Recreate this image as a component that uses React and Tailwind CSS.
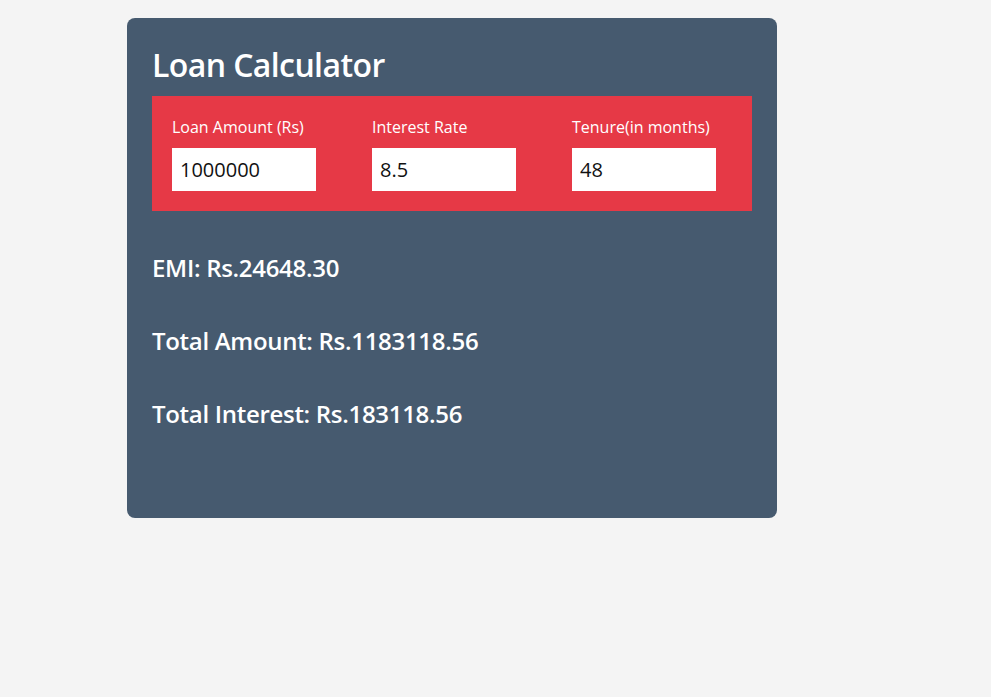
import React, { useState, useMemo } from 'react';

const Field = ({ label, value, onChange }) => (
  <div className="w-[200px] shrink-0 flex flex-col">
    <label className="text-[16px] leading-[22px] text-white">{label}</label>
    <input
      type="text"
      value={value}
      onChange={(e) => onChange(e.target.value)}
      className="mt-[10px] w-[144px] h-[43px] bg-white px-[8px] text-[20px] text-[#111] outline-none"
    />
  </div>
);

const App = () => {
  const [amount, setAmount] = useState('1000000');
  const [rate, setRate] = useState('8.5');
  const [tenure, setTenure] = useState('48');

  const result = useMemo(() => {
    const p = parseFloat(amount) || 0;
    const r = (parseFloat(rate) || 0) / 12 / 100;
    const n = parseInt(tenure) || 0;
    if (!p || !n) return { emi: 0, total: 0, interest: 0 };
    const emi = r === 0 ? p / n : (p * r * Math.pow(1 + r, n)) / (Math.pow(1 + r, n) - 1);
    const total = emi * n;
    return { emi, total, interest: total - p };
  }, [amount, rate, tenure]);

  return (
    <div className="min-h-[697px] bg-[#f4f4f4] pt-[18px] pl-[127px] font-['Open_Sans',sans-serif]">
      <div className="w-[650px] h-[500px] rounded-[8px] bg-[#465a6f] px-[25px] pt-[25px]">
        <h1 className="text-[32px] leading-[44px] font-semibold tracking-[-0.6px] text-white">Loan Calculator</h1>
        <div className="mt-[9px] bg-[#e63946] p-[20px] flex overflow-hidden">
          <Field label="Loan Amount (Rs)" value={amount} onChange={setAmount} />
          <Field label="Interest Rate" value={rate} onChange={setRate} />
          <Field label="Tenure(in months)" value={tenure} onChange={setTenure} />
        </div>
        <div className="mt-[40px] flex flex-col gap-[40px] text-[24px] leading-[33px] font-semibold tracking-[-0.3px] text-white">
          <h2>EMI: Rs.{result.emi.toFixed(2)}</h2>
          <h2>Total Amount: Rs.{result.total.toFixed(2)}</h2>
          <h2>Total Interest: Rs.{result.interest.toFixed(2)}</h2>
        </div>
      </div>
    </div>
  );
};

export default App;
